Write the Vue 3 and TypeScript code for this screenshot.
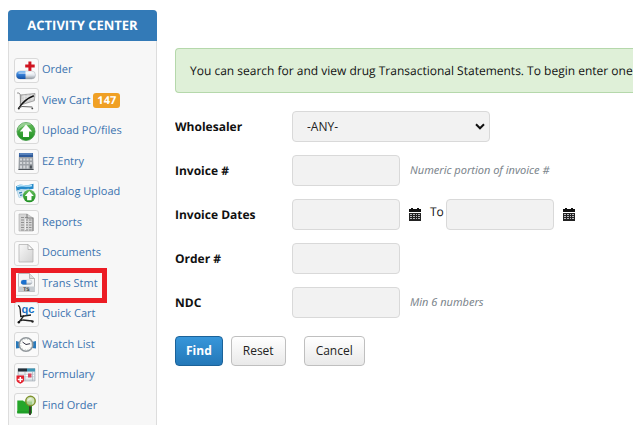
<script setup lang="ts">
import { ref } from 'vue'

interface MenuItem {
  id: string
  label: string
  badge?: number
  marked?: boolean
}

const items: MenuItem[] = [
  { id: 'order', label: 'Order' },
  { id: 'cart', label: 'View Cart', badge: 147 },
  { id: 'upload', label: 'Upload PO/files' },
  { id: 'entry', label: 'EZ Entry' },
  { id: 'catalog', label: 'Catalog Upload' },
  { id: 'reports', label: 'Reports' },
  { id: 'documents', label: 'Documents' },
  { id: 'trans', label: 'Trans Stmt', marked: true },
  { id: 'quick', label: 'Quick Cart' },
  { id: 'watch', label: 'Watch List' },
  { id: 'formulary', label: 'Formulary' },
  { id: 'find', label: 'Find Order' },
]

const wholesaler = ref('any')
const invoice = ref('')
const dateFrom = ref('')
const dateTo = ref('')
const order = ref('')
const ndc = ref('')

function reset() {
  wholesaler.value = 'any'
  for (const field of [invoice, dateFrom, dateTo, order, ndc]) field.value = ''
}
</script>

<template>
  <div class="page">
    <svg class="defs" width="0" height="0" aria-hidden="true">
      <defs>
        <linearGradient id="blue" x1="0" y1="0" x2="0" y2="1">
          <stop offset="0" stop-color="#8fc3f5" /><stop offset=".35" stop-color="#3b86dc" /><stop offset="1" stop-color="#1450a4" />
        </linearGradient>
        <linearGradient id="silver" x1="0" y1="0" x2="0" y2="1">
          <stop offset="0" stop-color="#ffffff" /><stop offset=".5" stop-color="#e4e9ef" /><stop offset="1" stop-color="#8d949c" />
        </linearGradient>
        <linearGradient id="green" x1="0" y1="0" x2="0" y2="1">
          <stop offset="0" stop-color="#66bd5c" /><stop offset="1" stop-color="#1c8f20" />
        </linearGradient>
        <linearGradient id="paper" x1="0" y1="0" x2="1" y2="1">
          <stop offset="0" stop-color="#f8f8f8" /><stop offset="1" stop-color="#d2d2d2" />
        </linearGradient>
        <symbol id="calendar" viewBox="0 0 12 13">
          <path d="M0 1h2V0h2v1h4V0h2v1h2v3H0z" fill="#111" />
          <path d="M0 5h12v8H0z" fill="#222" />
          <path d="M1 6h2v1H1zm3 0h2v1H4zm3 0h1v1H7zm2 0h2v1H9zM1 8h2v1H1zm3 0h2v1H4zm3 0h1v1H7zm2 0h2v1H9zM1 10h2v1H1zm3 0h2v1H4zm3 0h1v1H7zm2 0h2v1H9z" fill="#b9b9bd" />
        </symbol>
      </defs>
    </svg>

    <nav class="sidebar" aria-labelledby="menu-title">
      <h2 id="menu-title">ACTIVITY CENTER</h2>
      <ul>
        <li v-for="item in items" :key="item.id" :class="{ marked: item.marked }">
          <a href="#">
            <svg class="icon" viewBox="0 0 23 23" aria-hidden="true">
              <template v-if="item.id === 'order'">
                <path d="M13.400 2.400h3v3.200h3.300v3h-3.300v3.300h-3V8.600h-3.200v-3h3.200z" fill="#cf1420" />
                <rect x="1.300" y="12" width="19.200" height="8" rx="4" fill="url(#silver)" stroke="#a9b0b8" stroke-width=".5" />
                <path d="M10.500 12v8H5.300a4 4 0 0 1 0-8z" fill="url(#blue)" />
                <path d="M4 14.200h12" stroke="#fff" stroke-width="1.200" opacity=".6" stroke-linecap="round" />
              </template>
              <template v-else-if="item.id === 'cart'">
                <path d="M5.200 6 20 4.500l-.6 7.200L5.500 16z" fill="#cfcfcf" stroke="#8a8a8a" stroke-width=".7" />
                <path d="M7 8l12.500-1.500M6.500 10.500l13-1.500M9 5.600l1 8M13 5.300v7M17 5v6.500" stroke="#eee" stroke-width=".6" />
                <path d="M2 4h2l1.800 2.500-.5 9.500" fill="none" stroke="#888" stroke-width=".9" />
                <path d="M18.800 6.800C13 9 8 12.500 4 19" fill="none" stroke="#111" stroke-width="1.500" />
                <path d="M3 19.300 7 17.500l10.300.5" fill="none" stroke="#666" stroke-width="1" />
                <circle cx="3.800" cy="19.600" r="1" fill="#222" /><circle cx="17.300" cy="19.400" r=".9" fill="#444" />
              </template>
              <template v-else-if="item.id === 'upload'">
                <circle cx="11" cy="11.500" r="9" fill="url(#green)" stroke="#3d9741" stroke-width=".8" />
                <path d="M2.600 12a8.400 8.400 0 0 1 14-7.200C9 5 4 8 2.600 12z" fill="#fff" opacity=".35" />
                <path d="M11 4.500 17.200 11.500H14V17H8v-5.500H4.800z" fill="#fff" />
              </template>
              <template v-else-if="item.id === 'entry'">
                <path d="M4 3h14l.6 17H3.400z" fill="#9ca1a6" />
                <path d="M4 3h14v4H4z" fill="#2f5b9a" /><path d="M4.500 3.500h13v1h-13z" fill="#7fa8dc" />
                <path d="M5 8.500h2v2H5zm3.300 0h2v2h-2zm3.300 0h2v2h-2zm3.300 0h2v2h-2zM5 12h2v2H5zm3.300 0h2v2h-2zm3.300 0h2v2h-2zm3.300 0h2v2h-2zM5 15.500h2v3H5zm3.300 0h2v3h-2zm3.300 0h2v3h-2z" fill="#d4d7da" />
                <path d="M14.900 15.500h2v3h-2zM3.500 19h15v1h-15z" fill="#4c5258" />
              </template>
              <template v-else-if="item.id === 'catalog'">
                <path d="M1 5.500C6 1.500 10 6 18.500 2.800v5C11 10 7 6 1.500 10z" fill="#2489ca" />
                <path d="M2 5.500C7 3 10 6.500 17 4.500" fill="none" stroke="#b9e5fb" stroke-width="1.500" />
                <path d="m2 10 12-2 1.500 6L4 16.500z" fill="#d8e9f5" stroke="#9fcbe3" stroke-width=".7" />
                <path d="m4 12 3-.6M5 14.300l2.500-.5" stroke="#3d8ab9" stroke-width="1.300" />
                <circle cx="14.300" cy="15" r="6.300" fill="url(#green)" />
                <path d="m14.300 10 4.500 5h-2.300v4.200h-4.400V15H9.800z" fill="#fff" />
              </template>
              <template v-else-if="item.id === 'reports'">
                <path d="M4 3h8l6 4v13H4z" fill="#d5d5d5" stroke="#b3b3b3" stroke-width=".7" />
                <path d="M6 6.500h7M6 9h10.500M6 11.500h10.500M6 14h10.500M6 16.500h10.500M6 19h10.500" stroke="#909090" stroke-width="1.200" stroke-dasharray="3 1" />
                <path d="M12 3v4h6v13" fill="none" stroke="#808080" stroke-width="1.100" /><path d="M10.500 8v11" stroke="#eee" />
              </template>
              <template v-else-if="item.id === 'documents'">
                <path d="M4 2.500h9l5 5V20H4z" fill="url(#paper)" stroke="#b4b4b4" stroke-width=".8" />
                <path d="M13 2.500v5h5z" fill="#fafafa" stroke="#aaa" stroke-width=".8" />
              </template>
              <template v-else-if="item.id === 'trans'">
                <path d="M3.500 1.500h11l5 5v13h-16z" fill="#f5f6f7" stroke="#a8a8a8" stroke-width=".8" />
                <path d="M14.500 1.500v5h5" fill="#ddd" stroke="#aaa" stroke-width=".8" />
                <rect x="6" y="8" width="11" height="4.500" rx="2.200" fill="url(#silver)" stroke="#9faab5" stroke-width=".4" />
                <path d="M11.500 8v4.500H8.200a2.200 2.200 0 0 1 0-4.500z" fill="#1b70ce" />
                <path d="M3 14.500h17v5H3z" fill="#c6cbd0" />
                <text x="11.500" y="19" class="ts">TS</text>
              </template>
              <template v-else-if="item.id === 'quick'">
                <path d="M3 2.500c1.500.5 2 2 2.200 4l.5 7 10.300-1.500" fill="none" stroke="#222" stroke-width="1.300" />
                <path d="M9 12.500 4 19M4 18.500 8 17l9 1" fill="none" stroke="#222" stroke-width="1.300" />
                <circle cx="17.500" cy="18.500" r="1.200" fill="#222" /><circle cx="3.800" cy="19.300" r="1.200" fill="#111" />
                <text x="13" y="9.500" class="qc">qc</text>
              </template>
              <template v-else-if="item.id === 'watch'">
                <path d="M1 8 5 9v6l-4 .5zM21 8 17 9v6l4 .5z" fill="#2979ba" />
                <circle cx="11" cy="11.500" r="6.800" fill="#fdfdfc" stroke="#92989c" stroke-width="1.600" />
                <circle cx="11" cy="11.500" r="5.200" fill="none" stroke="#9aa" stroke-width=".8" stroke-dasharray=".7 2.100" />
                <path d="m7.500 9 3.500 2.500 4-.8" fill="none" stroke="#334" stroke-width="1" />
              </template>
              <template v-else-if="item.id === 'formulary'">
                <path d="M3 4.500h17V17H3z" fill="#d5dbe0" stroke="#9aa6ae" stroke-width=".6" />
                <path d="M3 4.500h9v3H3z" fill="#222e38" /><path d="M12 4.500h8v3h-8z" fill="#3c96b5" />
                <path d="M4 9h15M9 11.500h10M10 14h9" stroke="#fff" stroke-width="1.200" />
                <path d="M10 8v9M17.500 8v9" stroke="#aab5bd" stroke-width=".7" /><path d="M13 9.500h3.500v4H13z" fill="#d94b62" />
                <path d="M1.500 11.500H9v4.800c0 1.500-1.700 2.500-3.700 3.500-2-1-3.800-2-3.800-3.500z" fill="#e51f2c" />
                <path d="M5.300 13v5M2.800 15.500h5" stroke="#fff" stroke-width="1.500" />
              </template>
              <template v-else>
                <path d="M2.300 6.500H8l1 1h8v11.500H2.300z" fill="#25a62a" /><path d="M2.300 17h14.700v2.500H2.300z" fill="#1f9f27" />
                <path d="m15.200 11-.2 9" stroke="#333e28" stroke-width="2.300" stroke-linecap="round" />
                <circle cx="15.500" cy="7" r="4.700" fill="#c3dda9" fill-opacity=".8" stroke="#80922d" stroke-width="1.500" />
                <path d="M13 6.500c.8-1.700 2.200-1.800 3.500-1.500" fill="none" stroke="#fff" />
              </template>
            </svg>
            <span>{{ item.label }}</span>
            <b v-if="item.badge" class="badge">{{ item.badge }}</b>
          </a>
        </li>
      </ul>
    </nav>

    <main>
      <p class="alert">You can search for and view drug Transactional Statements. To begin enter one o</p>
      <form @submit.prevent>
        <div class="row">
          <label class="name" for="wholesaler">Wholesaler</label>
          <div class="select">
            <select id="wholesaler" v-model="wholesaler">
              <option value="any">-ANY-</option>
            </select>
            <svg viewBox="0 0 10 7" aria-hidden="true"><path d="m1 1.300 4 4 4-4" /></svg>
          </div>
        </div>
        <div class="row">
          <label class="name" for="invoice">Invoice #</label>
          <input id="invoice" v-model="invoice" type="text" aria-describedby="invoice-hint">
          <em id="invoice-hint">Numeric portion of invoice #</em>
        </div>
        <div class="row">
          <label class="name" for="from">Invoice Dates</label>
          <input id="from" v-model="dateFrom" type="text">
          <button type="button" class="pick" aria-label="Choose start date"><svg><use href="#calendar" /></svg></button>
          <label class="to" for="to">To</label>
          <input id="to" v-model="dateTo" type="text">
          <button type="button" class="pick" aria-label="Choose end date"><svg><use href="#calendar" /></svg></button>
        </div>
        <div class="row">
          <label class="name" for="order">Order #</label>
          <input id="order" v-model="order" type="text">
        </div>
        <div class="row">
          <label class="name" for="ndc">NDC</label>
          <input id="ndc" v-model="ndc" type="text" aria-describedby="ndc-hint">
          <em id="ndc-hint">Min 6 numbers</em>
        </div>
        <div class="actions">
          <button type="submit" class="btn primary">Find</button>
          <button type="button" class="btn" @click="reset">Reset</button>
          <button type="button" class="btn cancel">Cancel</button>
        </div>
      </form>
    </main>
  </div>
</template>

<style>
body {
  background: #fff;
}
</style>

<style scoped>
.page {
  display: flex;
  align-items: flex-start;
  gap: 18px;
  padding: 10px 8px 7px;
  color: #111;
  font: 12px/18px "Open Sans", "Noto Sans", sans-serif;
  text-rendering: geometricPrecision;
}

.defs {
  position: absolute;
}

.sidebar {
  box-sizing: border-box;
  flex: 0 0 149px;
  border: 1px solid #ddd;
  border-bottom: 0;
  border-radius: 4px 4px 0 0;
  background: #f7f7f7;
}

h2 {
  margin: -1px -1px 0;
  border-radius: 4px 4px 0 0;
  background: #337ab7;
  color: #fff;
  font-size: 13px;
  font-weight: 700;
  line-height: 31px;
  text-align: center;
}

ul {
  display: grid;
  grid-template-rows: repeat(12, 1fr);
  height: 366px;
  margin: 0;
  padding: 14px 5px 4px;
  list-style: none;
}

li {
  position: relative;
  display: flex;
  align-items: center;
}

li.marked::after {
  position: absolute;
  inset: -1px auto auto -3px;
  box-sizing: border-box;
  width: 96px;
  height: 35px;
  border: 5px solid #ec1c24;
  content: "";
  pointer-events: none;
}

a {
  display: flex;
  align-items: center;
  gap: 3px;
  color: #3b73af;
  font-size: 11px;
  text-decoration: none;
  white-space: nowrap;
}

.icon {
  box-sizing: border-box;
  width: 25px;
  height: 25px;
  border: 1px solid #d9d9d9;
  border-radius: 3px;
  background: #fafafa;
}

.ts {
  fill: #333;
  font: 700 5px "Liberation Sans", sans-serif;
  text-anchor: middle;
}

.qc {
  fill: #1670c4;
  font: 700 11px "Liberation Sans", sans-serif;
  text-anchor: middle;
}

.badge {
  padding: 0 4px;
  border-radius: 3px;
  background: #f0a024;
  color: #fff;
  line-height: 15px;
}

main {
  flex: 1;
  min-width: 0;
  padding-top: 38px;
  overflow: hidden;
}

.alert {
  margin: 0 0 18px;
  padding: 13px 0 12px 14px;
  border: 1px solid #b5d8ab;
  border-right: 0;
  border-radius: 4px 0 0 4px;
  background: #dff0d8;
  overflow: hidden;
  white-space: nowrap;
}

form {
  display: grid;
  gap: 13px;
}

.row {
  display: flex;
  align-items: center;
}

.name {
  flex: 0 0 117px;
  font-weight: 700;
}

input,
select {
  box-sizing: border-box;
  width: 108px;
  height: 31px;
  padding: 0 14px;
  border: 1px solid #d9d9d9;
  border-radius: 4px;
  background: #f2f2f2;
  color: #222;
  font: inherit;
}

.select {
  position: relative;
}

select {
  display: block;
  width: 198px;
  appearance: none;
}

.select svg {
  position: absolute;
  top: 12px;
  right: 5px;
  width: 10px;
  height: 7px;
  fill: none;
  stroke: #111;
  stroke-width: 2;
  pointer-events: none;
}

em {
  margin-left: 10px;
  color: #7c858c;
  font-family: "Noto Sans", "Open Sans", sans-serif;
  font-size: 11px;
}

.pick {
  display: flex;
  margin: 0 9px;
  padding: 0;
  border: 0;
  background: none;
}

.pick svg {
  width: 12px;
  height: 13px;
}

.to {
  flex: 0 0 16px;
  padding-bottom: 6px;
}

.actions {
  display: flex;
  gap: 8px;
  padding-top: 5px;
}

.btn {
  box-sizing: border-box;
  height: 30px;
  padding: 0 11px;
  border: 1px solid #bfbfbf;
  border-radius: 4px;
  background: linear-gradient(#fff, #e9e9e9);
  color: #222;
  font: inherit;
}

.primary {
  padding: 0 10px;
  border-color: #1b6299;
  background: linear-gradient(#3796da, #2478b8);
  color: #fff;
  font-weight: 700;
}

.cancel {
  margin-left: 10px;
}
</style>
